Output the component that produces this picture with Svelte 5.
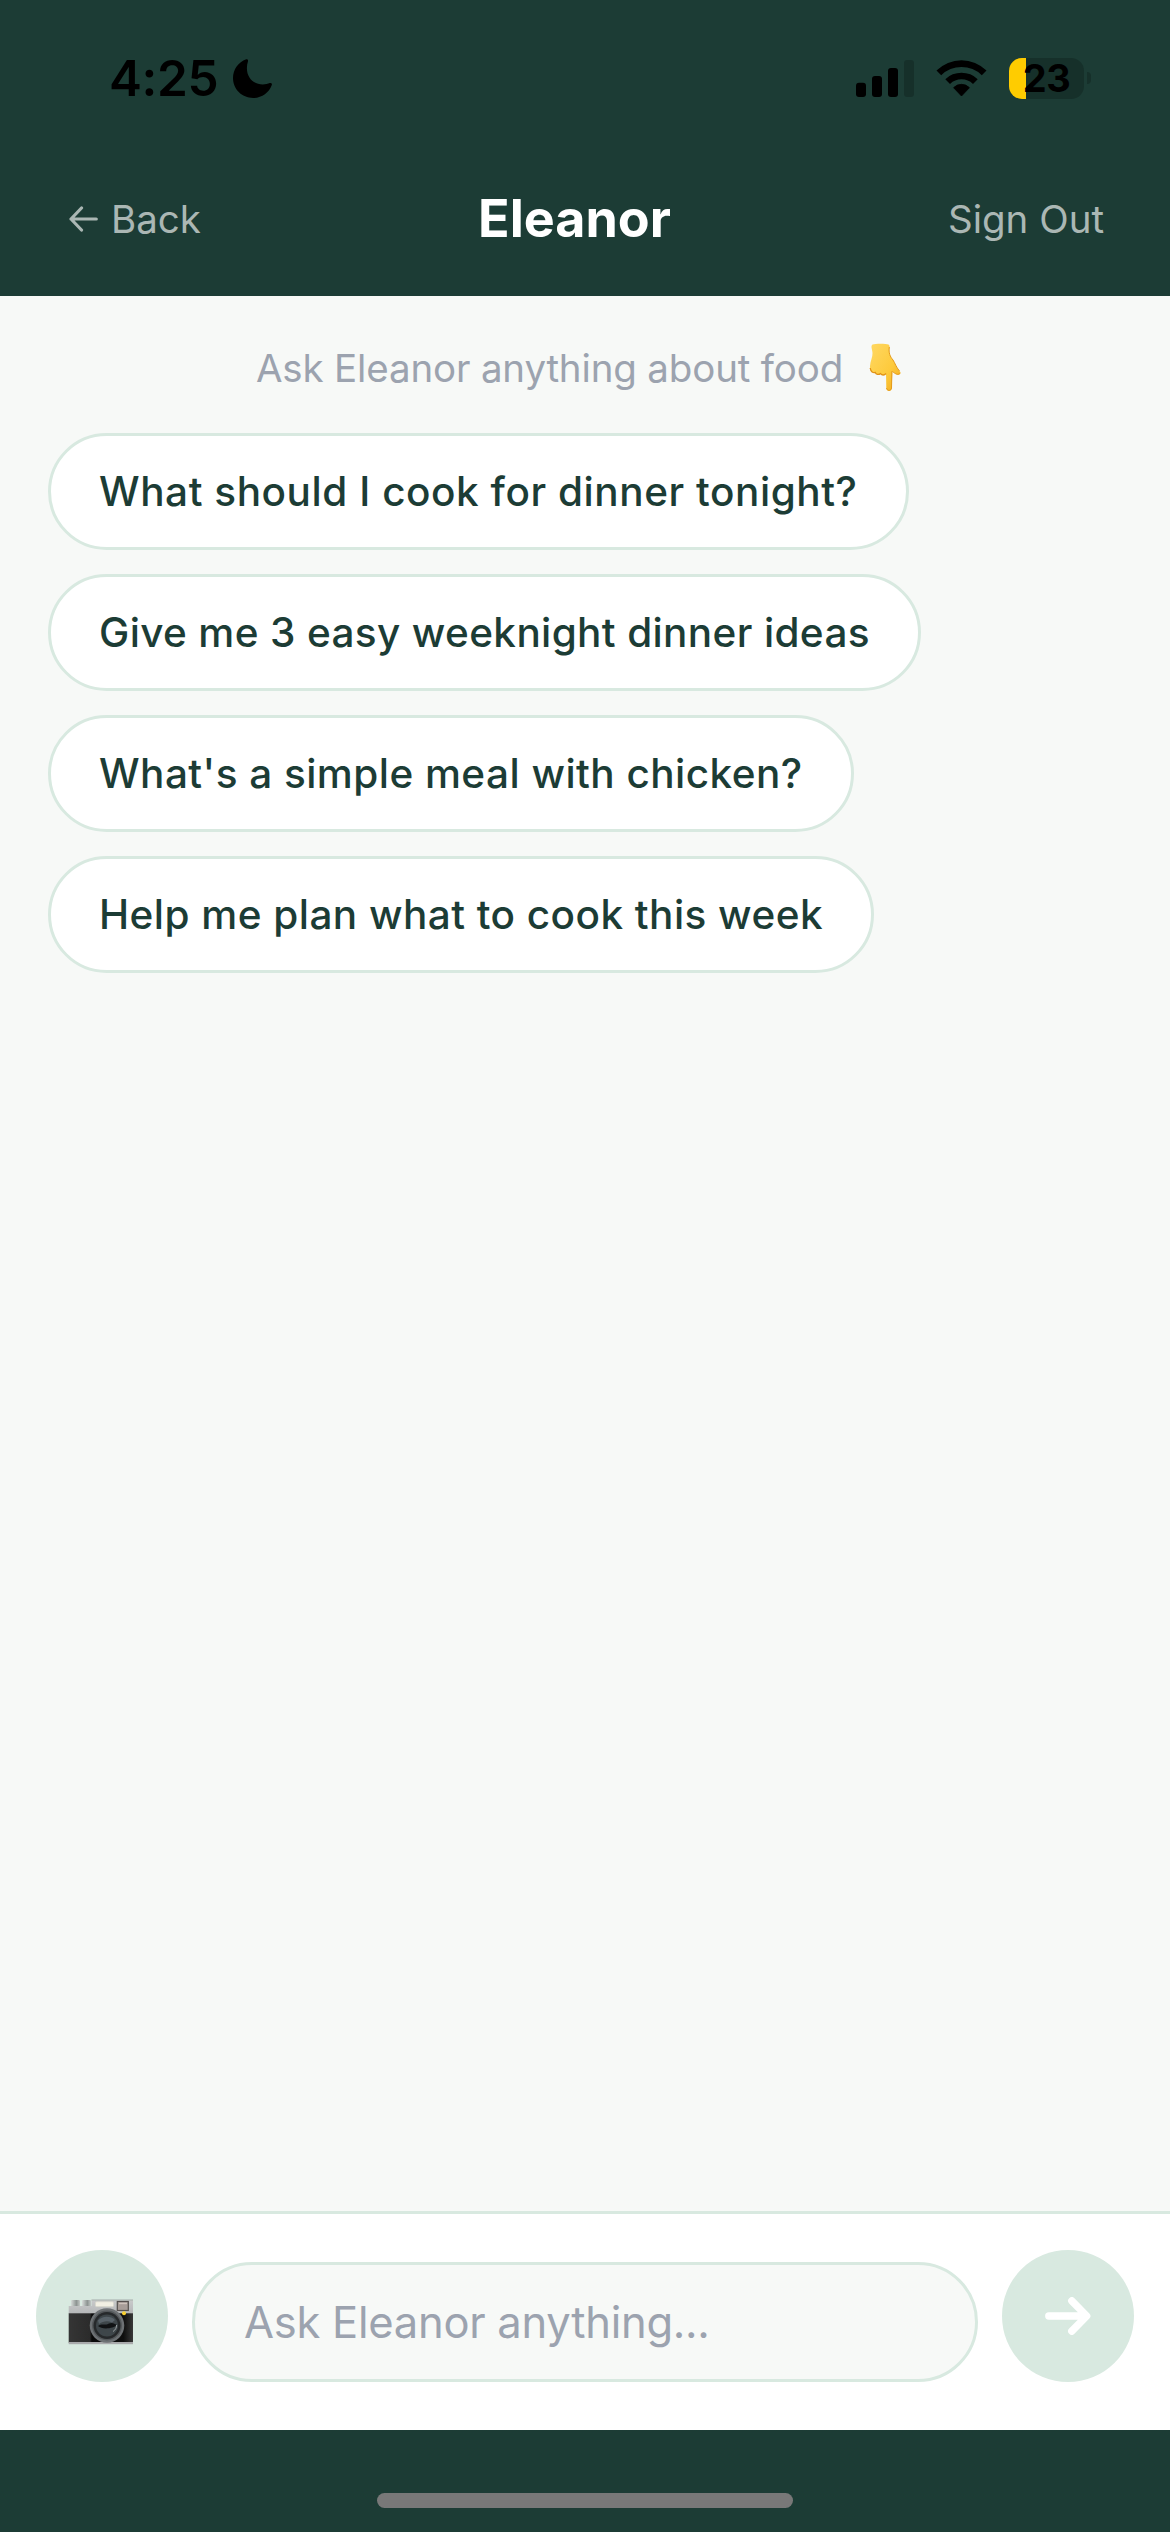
<script lang="ts">
	// tracking is the letter spacing in px
	let suggestions = [
		{ text: 'What should I cook for dinner tonight?', tracking: 0.55 },
		{ text: 'Give me 3 easy weeknight dinner ideas', tracking: 0.36 },
		{ text: "What's a simple meal with chicken?", tracking: 0.46 },
		{ text: 'Help me plan what to cook this week', tracking: 0.46 }
	];

	let battery = 23;
	let message = '';

	function ask(text: string) {
		message = text;
	}
</script>

<div class="screen">
	<div class="status-bar">
		<div class="clock">
			<span class="time">4:25</span>
			<svg class="moon" viewBox="0 0 39 39" width="39" height="39" aria-hidden="true">
				<path d="M13.2 0.3C14.4 -0.1 15.4 1 15 2.2C14.2 4.6 13.9 6.8 13.9 9.2C13.9 18.6 20.4 25.4 29.8 25.4C32.4 25.4 34.9 24.9 36.8 24.1C38.2 23.6 39.3 24.6 38.8 26C36 33.7 28.7 39 20.2 39C8.900 39 0 30.200 0 19.100C0 10.500 5.300 3.200 13.2 0.3Z" />
			</svg>
		</div>
		<div class="status-icons">
			<svg class="signal" viewBox="0 0 58 37" width="58" height="37" aria-hidden="true">
				<rect x="0" y="22.700" width="10" height="14.300" rx="3" />
				<rect x="16" y="16" width="10" height="21" rx="3" />
				<rect x="32" y="8" width="10" height="29" rx="3" />
				<rect x="48" y="0" width="10" height="37" rx="3" opacity="0.2" />
			</svg>
			<svg class="wifi" viewBox="0 0 51 38" width="51" height="38" aria-hidden="true">
				<path d="M0.500 11.500A35.500 35.500 0 0 1 50.500 11.500L45.800 16.200A29 29 0 0 0 5.200 16.200Z" />
				<path d="M9.300 20.300A23 23 0 0 1 41.700 20.300L37 25A16.600 16.600 0 0 0 14 25Z" />
				<path d="M17.600 28.700A11 11 0 0 1 33.400 28.700L25.500 37Z" stroke="#000" stroke-width="0.800" stroke-linejoin="round" />
			</svg>
			<div class="battery">
				<div class="battery-body">
					<div class="battery-fill" style="width: {battery}%"></div>
					<span class="battery-text">{battery}</span>
				</div>
				<div class="battery-cap"></div>
			</div>
		</div>
	</div>

	<header>
		<button class="nav-btn back">
			<svg viewBox="0 0 29 26" width="29" height="26" aria-hidden="true">
				<path d="M27.300 13H2M12.500 2L2 13L12.500 24" />
			</svg>
			<span>Back</span>
		</button>
		<h1>Eleanor</h1>
		<button class="nav-btn">Sign Out</button>
	</header>

	<main>
		<p class="hint">
			<span>Ask Eleanor anything about food</span>
			<svg viewBox="0 0 60 60" width="60" height="60" role="img" aria-label="pointing down">
				<defs>
					<linearGradient id="skin" x1="0" y1="0" x2="1" y2="1">
						<stop offset="0" stop-color="#ffd862" />
						<stop offset="0.600" stop-color="#fdca3c" />
						<stop offset="1" stop-color="#f0a81c" />
					</linearGradient>
				</defs>
				<path d="M18.500 6.600C21 5.600 32 5.600 34.500 6.600C36 7.400 35.500 9.500 35.200 12.500C35 16 36.500 19 39 22C41.500 25.500 42 29.500 46.300 34C47.500 35.800 45 37.300 43 36.500C41 35.800 40 34.500 38.300 33.500L37.800 50C37.700 53.800 32.400 53.800 32.300 50L32 35.500C30.500 37.500 28 37.500 26.500 35.600C24.500 37 22 36.500 21.300 34.500C17.500 35 15.800 32.500 16 28C16.200 23 18.800 19 18.500 15C18.400 12 16.300 8 18.500 6.600Z" fill="url(#skin)" />
				<path d="M16.200 30C16.800 34 19 35 21.300 34.500C22 36.500 24.500 37 26.500 35.600C28 37.500 30.500 37.500 32 35.500" fill="none" stroke="#e19216" stroke-width="1.300" />
				<path d="M37.900 33.300L37.500 50C37.300 53.200 32.800 53.200 32.600 50M38.300 33.500C41 35.500 43.500 37.500 45.800 35.500M35.300 9C34.500 15 36 18.500 39 22C41 25 42 29 45.500 33" fill="none" stroke="#e59b1a" stroke-width="1" />
			</svg>
		</p>
		<div class="suggestions">
			{#each suggestions as { text, tracking }}
				<button class="suggestion" style="letter-spacing: {tracking}px" on:click={() => ask(text)}>{text}</button>
			{/each}
		</div>
	</main>

	<div class="composer">
		<button class="round-btn photo" aria-label="Add photo">
			<svg viewBox="0 0 66 46" width="66" height="46" aria-hidden="true">
				<defs>
					<linearGradient id="metal" x1="0" y1="0" x2="0" y2="1">
						<stop offset="0" stop-color="#c9cbcb" />
						<stop offset="1" stop-color="#b4b6b8" />
					</linearGradient>
					<linearGradient id="knob" x1="0" y1="0" x2="1" y2="0">
						<stop offset="0" stop-color="#d5dbd8" />
						<stop offset="0.600" stop-color="#8d9492" />
						<stop offset="1" stop-color="#c2c8c5" />
					</linearGradient>
					<linearGradient id="leather" x1="0" y1="0" x2="1" y2="0">
						<stop offset="0" stop-color="#353535" />
						<stop offset="0.330" stop-color="#2b2b2b" />
						<stop offset="0.360" stop-color="#080808" />
						<stop offset="0.850" stop-color="#0e0e0e" />
						<stop offset="1" stop-color="#383838" />
					</linearGradient>
				</defs>
				<rect x="3" y="1" width="9" height="7" rx="1" fill="url(#knob)" />
				<rect x="14" y="1" width="9" height="7" rx="1" fill="url(#knob)" />
				<path d="M0.700 7H23.500V0.800H65V15H0.700Z" fill="url(#metal)" />
				<path d="M23.500 1H65" stroke="#a9b3ae" stroke-width="1" />
				<rect x="0.700" y="14.300" width="64.300" height="29.500" fill="url(#leather)" />
				<rect x="0.700" y="43" width="64.300" height="2.200" fill="#a9aaac" />
				<rect x="27.500" y="2.800" width="18" height="4.800" rx="1.200" fill="#f2f0e4" stroke="#d8d6ca" stroke-width="0.600" />
				<rect x="49.300" y="2.500" width="11" height="9" fill="#a79d98" stroke="#55504e" stroke-width="1.200" />
				<path d="M51 4.500H59" stroke="#cfc4bd" stroke-width="1.400" />
				<circle cx="39" cy="26.500" r="17.300" fill="#6d7174" />
				<circle cx="39" cy="26.500" r="15" fill="#54585b" />
				<circle cx="39" cy="26.500" r="13.500" fill="#26292b" />
				<circle cx="39" cy="26.500" r="11" fill="#3e464a" />
				<path d="M30 21.500C34 16.500 43 16.500 47 21L44 23.500C40 21.500 35 22 31 25Z" fill="#59636a" />
				<path d="M30 27C34 24 37 27 41 24.500C44 23 47 24.500 48.500 26C46 29.500 34 31 30 27Z" fill="#101214" />
				<path d="M45 32.500C47.500 31 48.600 28.500 48.600 26" fill="none" stroke="#a6aaab" stroke-width="0.900" />
				<circle cx="56" cy="14.300" r="2" fill="#f9d02f" />
			</svg>
		</button>
		<input bind:value={message} placeholder="Ask Eleanor anything..." autocomplete="off" />
		<button class="round-btn send" aria-label="Send">
			<svg viewBox="0 0 46 38" width="46" height="38" aria-hidden="true">
				<path d="M3.800 19H41M26.800 3.800L41.700 19L26.800 34.200" />
			</svg>
		</button>
	</div>

	<div class="home-area">
		<div class="home-indicator"></div>
	</div>
</div>

<style>
:global(body) {
	margin: 0;
	background: #1c3c35;
}
.screen {
	display: flex;
	flex-direction: column;
	width: 1170px;
	height: 2532px;
	overflow: hidden;
	background: #f7f9f7;
	font-family: Inter, "Liberation Sans", sans-serif;
}
button {
	font-family: inherit;
	border: none;
	margin: 0;
	padding: 0;
	cursor: pointer;
}
svg {
	display: block;
	flex: none;
}
.status-bar {
	display: flex;
	align-items: center;
	justify-content: space-between;
	height: 156px;
	box-sizing: border-box;
	padding: 0 79px 0 109px;
	background: #1c3c35;
	color: #000;
}
.clock, .status-icons {
	display: flex;
	align-items: center;
}
.time {
	font-size: 49.5px;
	font-weight: 600;
	line-height: 60px;
	letter-spacing: -0.4px;
}
.moon {
	margin: 1px 0 0 15px;
}
.wifi {
	margin-left: 22px;
}
.battery {
	display: flex;
	align-items: center;
	gap: 3px;
	margin-left: 22px;
}
.battery-body {
	display: grid;
	width: 75px;
	height: 41px;
	border-radius: 13px;
	background: #16302a;
}
.battery-fill, .battery-text {
	grid-area: 1 / 1;
}
.battery-fill {
	border-radius: 13px 0 0 13px;
	background: #ffcc00;
}
.battery-text {
	text-align: center;
	font-size: 38px;
	font-weight: 700;
	line-height: 41px;
	letter-spacing: -0.5px;
}
.battery-cap {
	width: 4px;
	height: 12px;
	border-radius: 0 4px 4px 0;
	background: #16302a;
}
header {
	display: flex;
	align-items: center;
	justify-content: space-between;
	height: 140px;
	box-sizing: border-box;
	padding: 0 66px 14px 69px;
	background: #1c3c35;
}
.nav-btn {
	display: flex;
	align-items: center;
	gap: 13px;
	background: transparent;
	color: #abb7b4;
	font-size: 38.5px;
	line-height: 48px;
}
.back svg path {
	fill: none;
	stroke: #abb7b4;
	stroke-width: 3.2;
	stroke-linecap: round;
	stroke-linejoin: round;
}
h1 {
	margin: 0;
	color: #fff;
	font-size: 52px;
	font-weight: 700;
	line-height: 64px;
}
main {
	flex: 1;
	padding: 42px 48px 0;
}
.hint {
	display: flex;
	align-items: center;
	justify-content: center;
	gap: 11px;
	margin: 0 0 35px;
	color: #9ca3af;
	font-size: 38.5px;
	line-height: 60px;
	letter-spacing: -0.16px;
}
.suggestions {
	display: flex;
	flex-direction: column;
	align-items: flex-start;
	gap: 24px;
}
.suggestion {
	padding: 30px 48px;
	border: 3px solid #d8e9e0;
	border-radius: 60px;
	background: #fff;
	color: #1c3c35;
	font-size: 40.5px;
	font-weight: 500;
	line-height: 51px;
	white-space: nowrap;
}
.composer {
	display: flex;
	align-items: flex-end;
	gap: 24px;
	padding: 36px 36px 48px;
	border-top: 3px solid #d8e9e0;
	background: #fff;
}
.round-btn {
	display: flex;
	align-items: center;
	justify-content: center;
	flex: none;
	width: 132px;
	height: 132px;
	border-radius: 50%;
	background: #d8e9e0;
}
.photo svg {
	margin: 11px 0 0 -2px;
}
.send svg path {
	fill: none;
	stroke: #fff;
	stroke-width: 7.4;
	stroke-linecap: round;
	stroke-linejoin: round;
}
input {
	flex: 1;
	min-width: 0;
	height: 120px;
	box-sizing: border-box;
	padding: 0 48px 0 49px;
	border: 3px solid #d8e9e0;
	border-radius: 60px;
	outline: none;
	background: #f7f9f7;
	color: #1c3c35;
	font-family: inherit;
	font-size: 43.5px;
	letter-spacing: -0.25px;
}
input::placeholder {
	color: #9ca3af;
	opacity: 1;
}
.home-area {
	display: flex;
	justify-content: center;
	align-items: flex-start;
	height: 102px;
	box-sizing: border-box;
	padding-top: 63px;
	background: #1c3c35;
}
.home-indicator {
	width: 416px;
	height: 15px;
	border-radius: 8px;
	background: #787878;
}
</style>
